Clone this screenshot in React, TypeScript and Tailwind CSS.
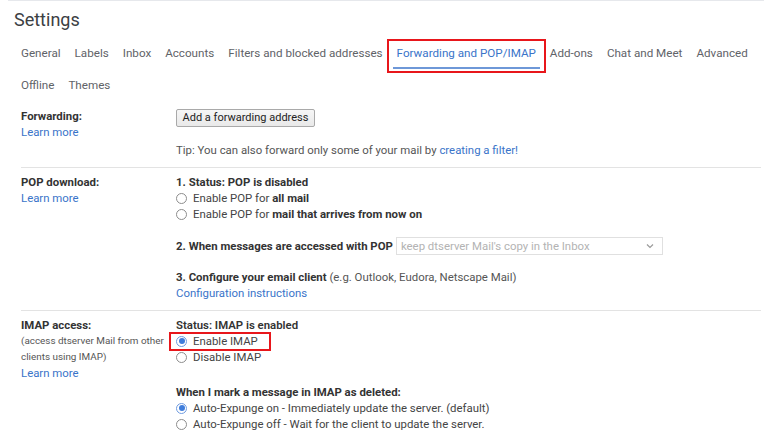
import React from "react";

const font = { fontFamily: "Roboto, 'Liberation Sans', Arial, sans-serif" };

function Radio({ checked }: { checked?: boolean }) {
  return (
    <span
      className={
        "inline-flex h-[11px] w-[11px] shrink-0 items-center justify-center rounded-full border " +
        (checked ? "border-[#6f9be0] bg-white" : "border-[#8d8d8d] bg-white")
      }
    >
      {checked && <span className="h-[6px] w-[6px] rounded-full bg-[#3f7ddb]" />}
    </span>
  );
}

function RadioLine({ checked, children }: { checked?: boolean; children: React.ReactNode }) {
  return (
    <div className="flex h-[16px] items-center gap-[6px] whitespace-nowrap">
      <Radio checked={checked} />
      <span className="text-[#444]">{children}</span>
    </div>
  );
}

const tabs1 = ["General", "Labels", "Inbox", "Accounts", "Filters and blocked addresses"];
const tabs1b = ["Add-ons", "Chat and Meet", "Advanced"];

export default function App() {
  return (
    <div className="h-[441px] w-[772px] overflow-hidden bg-white text-[11.4px]" style={font}>
      <div className="mx-[8px] h-px bg-[#e6e8ec]" />
      <div className="ml-[14px] mt-[5px] h-[28px] text-[18px] leading-[28px] text-[#3c4043]">Settings</div>

      <div className="ml-[14px] mt-[4px] flex h-[32px] items-center whitespace-nowrap text-[11.65px] text-[#5f6368]">
        {tabs1.map((t) => (
          <span key={t} className="px-[7px]">{t}</span>
        ))}
        <span className="relative flex h-[32px] items-center px-[7px] text-[#3a74c9]">
          Forwarding and POP/IMAP
          <span className="absolute bottom-[1px] left-[3px] right-[3px] h-[2px] bg-[#6e98d8]" />
          <span className="absolute -bottom-[3px] -left-[3px] -right-[3px] top-[1px] border-2 border-[#e8161b]" />
        </span>
        {tabs1b.map((t) => (
          <span key={t} className="px-[7px]">{t}</span>
        ))}
      </div>
      <div className="ml-[14px] flex h-[32px] items-center whitespace-nowrap text-[11.65px] text-[#5f6368]">
        <span className="px-[7px]">Offline</span>
        <span className="px-[7px]">Themes</span>
      </div>

      <div className="ml-[21px] mr-[11px] leading-[16px]">
        {/* Forwarding */}
        <div className="flex pb-[9px] pt-[6px]">
          <div className="w-[155px] shrink-0">
            <div className="font-bold text-[#333]">Forwarding:</div>
            <div className="text-[#3a74c9]">Learn more</div>
          </div>
          <div className="flex-1">
            <button className="mt-[1px] flex h-[18px] w-[139px] items-center justify-center rounded-[2px] border border-[#a9a9a9] bg-gradient-to-b from-[#f6f6f6] to-[#e9e9e9] text-[11px] text-[#222]">
              Add a forwarding address
            </button>
            <div className="mt-[15px] whitespace-nowrap text-[#555]">
              Tip: You can also forward only some of your mail by{" "}
              <span className="text-[#3a74c9]">creating a filter!</span>
            </div>
          </div>
        </div>
        <div className="h-px bg-[#e3e3e3]" />

        {/* POP */}
        <div className="flex pb-[9px] pt-[6px]">
          <div className="w-[155px] shrink-0">
            <div className="font-bold text-[#333]">POP download:</div>
            <div className="text-[#3a74c9]">Learn more</div>
          </div>
          <div className="flex-1">
            <div className="font-bold text-[#333]">1. Status: POP is disabled</div>
            <RadioLine>
              Enable POP for <b className="text-[#333]">all mail</b>
            </RadioLine>
            <RadioLine>
              Enable POP for <b className="text-[#333]">mail that arrives from now on</b>
            </RadioLine>
            <div className="mt-[15px] flex h-[18px] items-center gap-[3px] whitespace-nowrap">
              <span className="font-bold text-[#333]">2. When messages are accessed with POP</span>
              <div className="flex h-[18px] w-[267px] items-center justify-between border border-[#e0e0e0] pl-[4px] pr-[8px] text-[#b3b3b3]">
                <span>keep dtserver Mail's copy in the Inbox</span>
                <svg width="8" height="6" viewBox="0 0 8 6" fill="none">
                  <path d="M1 1.5 L4 4.5 L7 1.5" stroke="#9a9a9a" strokeWidth="1.2" />
                </svg>
              </div>
            </div>
            <div className="mt-[14px] whitespace-nowrap text-[#555]">
              <b className="text-[#333]">3. Configure your email client</b> (e.g. Outlook, Eudora, Netscape Mail)
            </div>
            <div className="text-[#3a74c9]">Configuration instructions</div>
          </div>
        </div>
        <div className="h-px bg-[#e3e3e3]" />

        {/* IMAP */}
        <div className="flex pt-[6px]">
          <div className="w-[155px] shrink-0">
            <div className="font-bold text-[#333]">IMAP access:</div>
            <div className="whitespace-nowrap text-[9.9px] text-[#555]">(access dtserver Mail from other</div>
            <div className="whitespace-nowrap text-[9.9px] text-[#555]">clients using IMAP)</div>
            <div className="text-[#3a74c9]">Learn more</div>
          </div>
          <div className="flex-1">
            <div className="font-semibold text-[#333]">Status: IMAP is enabled</div>
            <div className="relative">
              <RadioLine checked>Enable IMAP</RadioLine>
              <span className="absolute -left-[7px] -top-[1px] h-[19px] w-[102px] border-2 border-[#e8161b]" />
            </div>
            <RadioLine>Disable IMAP</RadioLine>
            <div className="mt-[19px] whitespace-nowrap font-bold text-[#333]">When I mark a message in IMAP as deleted:</div>
            <RadioLine checked>Auto-Expunge on - Immediately update the server. (default)</RadioLine>
            <RadioLine>Auto-Expunge off - Wait for the client to update the server.</RadioLine>
          </div>
        </div>
      </div>
    </div>
  );
}
